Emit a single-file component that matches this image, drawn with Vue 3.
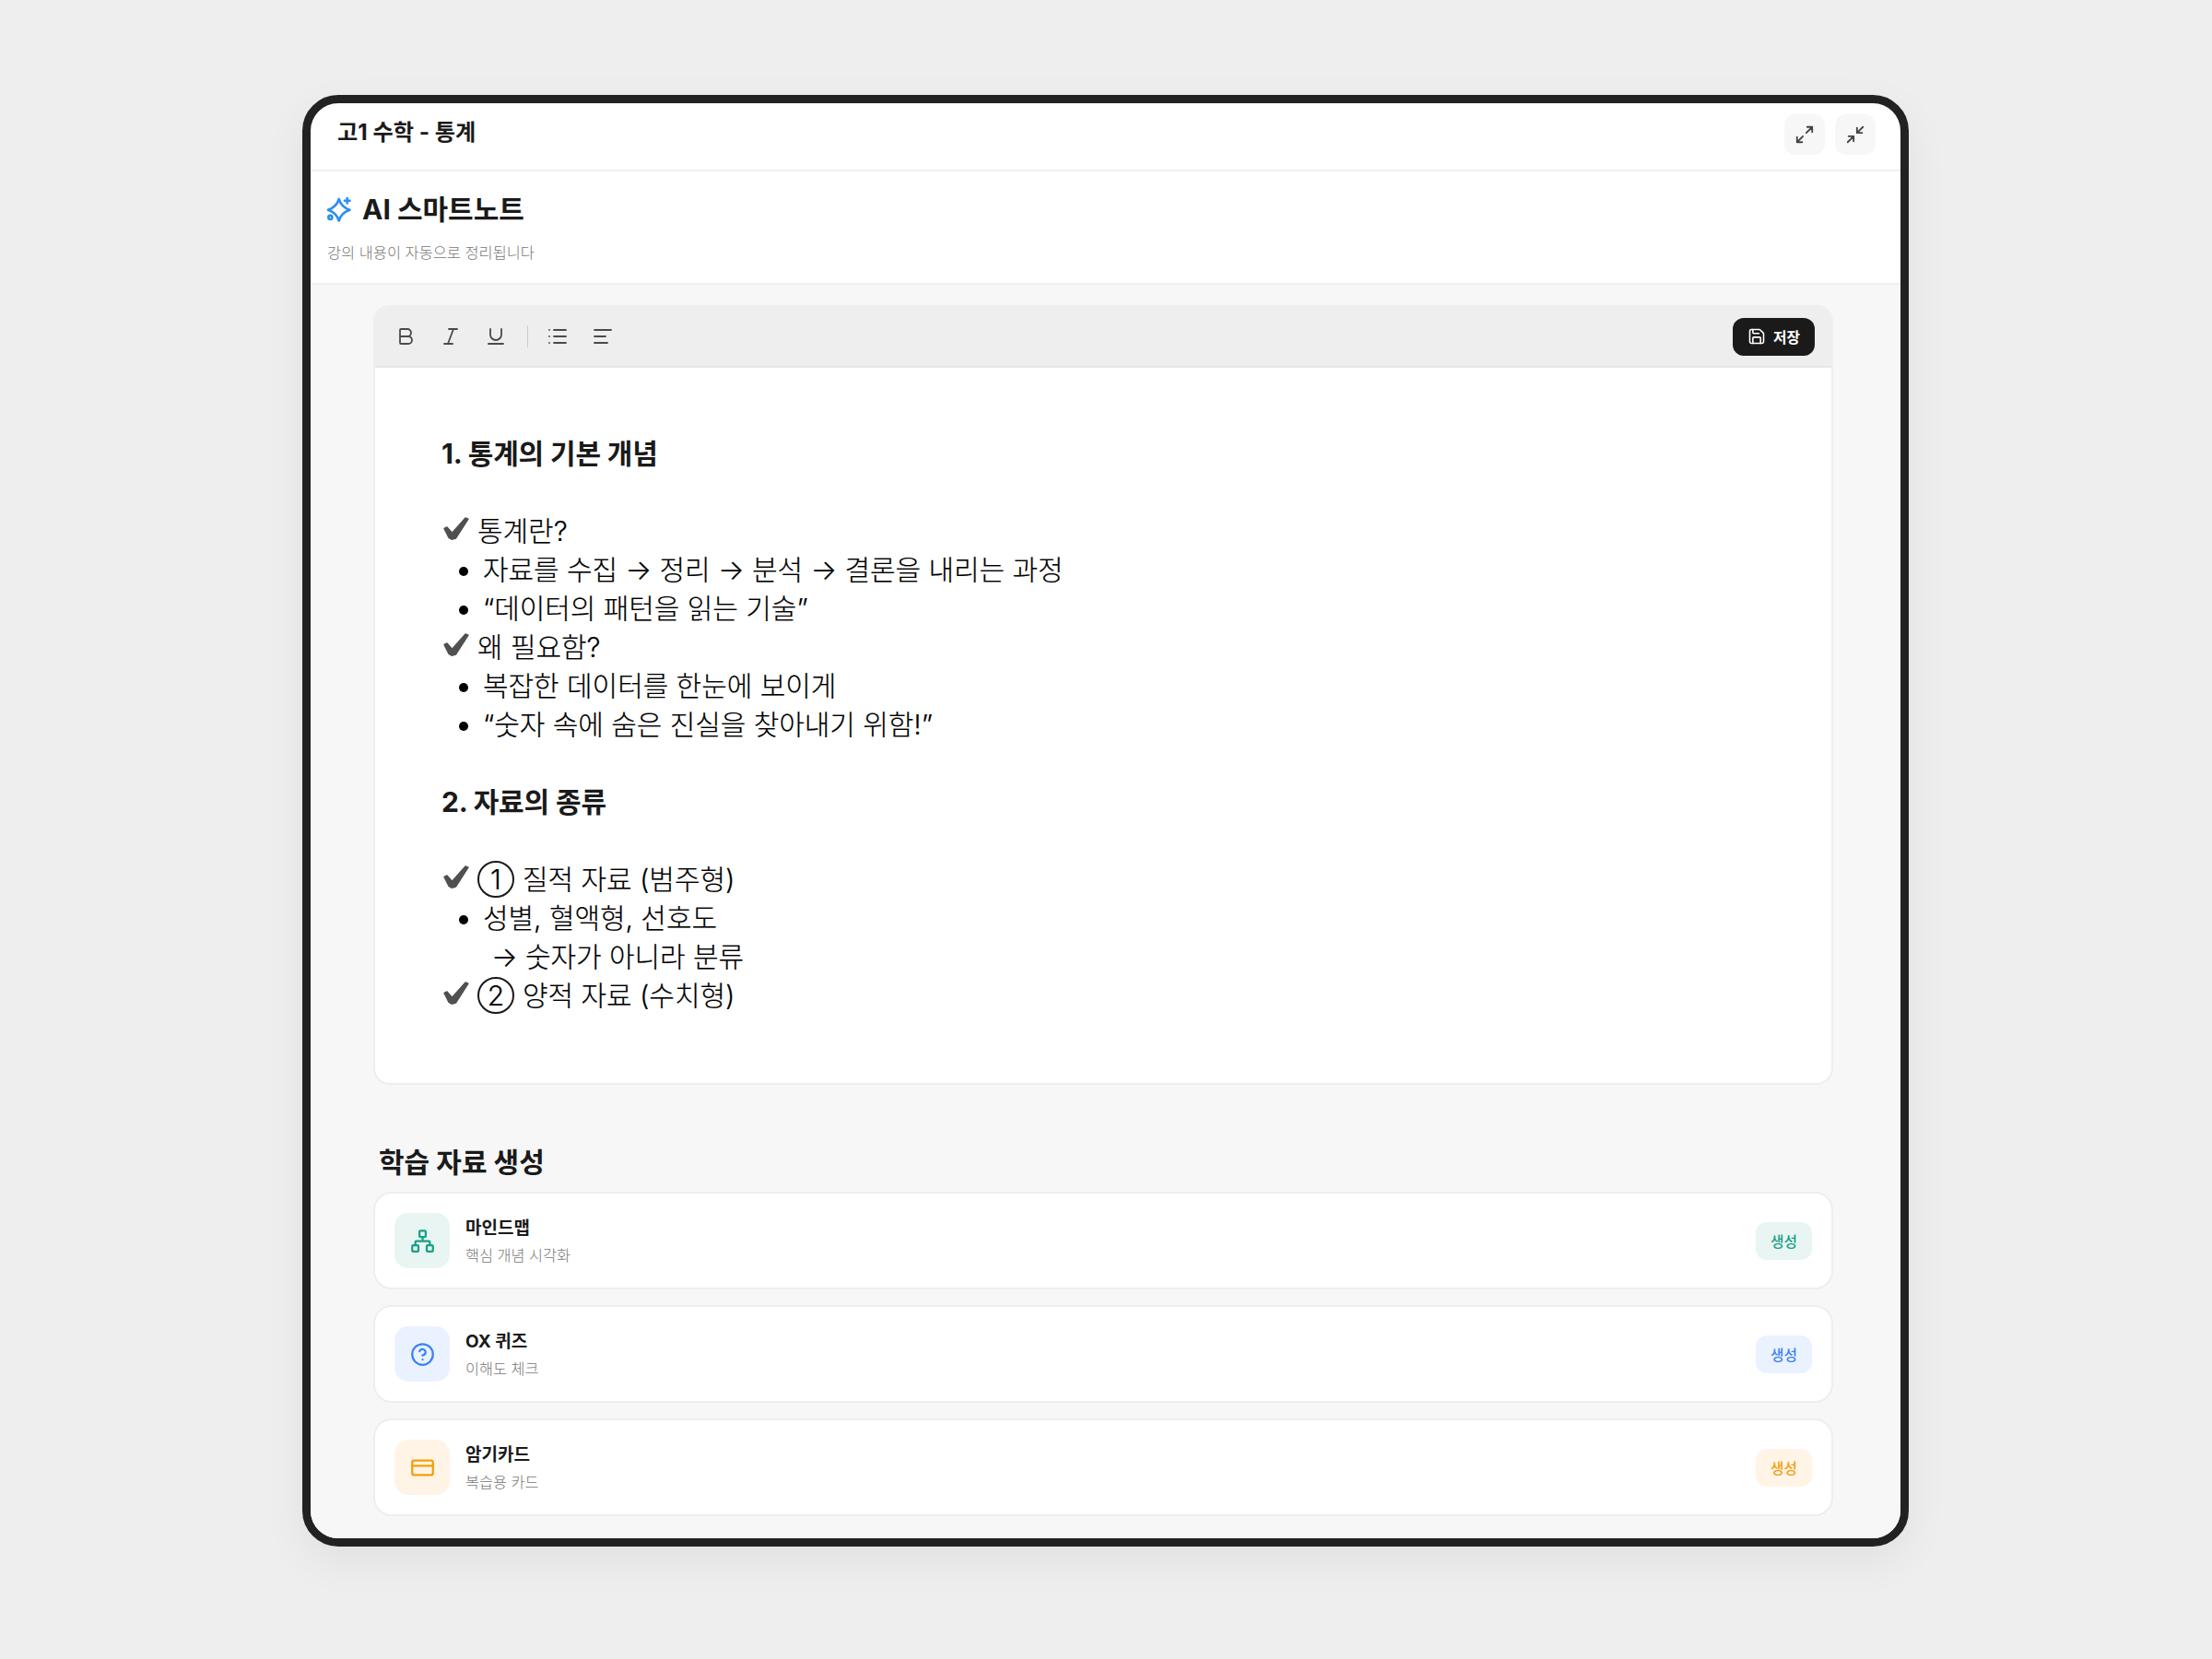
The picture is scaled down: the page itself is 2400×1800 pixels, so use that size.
<script setup>
const checkPath = 'M12 21.5 15 20l5.5 6.2L35 10l3 1.2L24.5 32l-4.5 1.2-3-1.7z'
const tools = [
  { title: '마인드맵', sub: '핵심 개념 시각화', tone: 'green', icon: 'map' },
  { title: 'OX 퀴즈', sub: '이해도 체크', tone: 'blue', icon: 'quiz' },
  { title: '암기카드', sub: '복습용 카드', tone: 'orange', icon: 'card' }
]
</script>

<template>
  <div class="page">
    <div class="device">
      <header class="topbar">
        <div class="course">고1 수학 - 통계</div>
        <div class="top-actions">
          <button class="round">
            <svg viewBox="0 0 24 24"><path d="M15 3h6v6M21 3l-7 7M3 21l7-7M9 21H3v-6" /></svg>
          </button>
          <button class="round">
            <svg viewBox="0 0 24 24"><path d="M4 14h6v6M20 10h-6V4M14 10l7-7M3 21l7-7" /></svg>
          </button>
        </div>
      </header>
      <section class="note-head">
        <div class="note-title">
          <svg class="spark" viewBox="0 0 24 24">
            <path d="M11.3 1.7C12.8 7 16 10.4 21.8 12.2C16 14 12.8 17.4 11.3 22.7C9.8 17.4 6.6 14 .8 12.2C6.6 10.4 9.8 7 11.3 1.7Z" />
            <path d="M19.3.8v5M16.8 3.3h5" />
            <circle cx="3" cy="19.5" r="1.8" />
          </svg>
          <span>AI 스마트노트</span>
        </div>
        <p class="note-sub">강의 내용이 자동으로 정리됩니다</p>
      </section>
      <main class="content">
        <section class="editor">
          <div class="toolbar">
            <div class="tools">
              <svg viewBox="0 0 24 24"><path d="M6 12h9a4 4 0 0 1 0 8H7a1 1 0 0 1-1-1V5a1 1 0 0 1 1-1h7a4 4 0 0 1 0 8" /></svg>
              <svg viewBox="0 0 24 24"><path d="M19 4h-9M14 20H5M15 4 9 20" /></svg>
              <svg viewBox="0 0 24 24"><path d="M6 4v6a6 6 0 0 0 12 0V4M4 20h16" /></svg>
              <i class="sep"></i>
              <svg viewBox="0 0 24 24"><path d="M3 5h.01M3 12h.01M3 19h.01M8 5h13M8 12h13M8 19h13" /></svg>
              <svg viewBox="0 0 24 24"><path d="M21 5H3M15 12H3M17 19H3" /></svg>
            </div>
            <button class="save">
              <svg viewBox="0 0 24 24"><path d="M15.2 3a2 2 0 0 1 1.4.6l3.8 3.8a2 2 0 0 1 .6 1.4V19a2 2 0 0 1-2 2H5a2 2 0 0 1-2-2V5a2 2 0 0 1 2-2z" /><path d="M17 21v-7a1 1 0 0 0-1-1H8a1 1 0 0 0-1 1v7M7 3v4a1 1 0 0 0 1 1h7" /></svg>
              <span>저장</span>
            </button>
          </div>
          <div class="doc">
            <h3>1. 통계의 기본 개념</h3>
            <p class="blank">&nbsp;</p>
            <p class="row"><svg class="chk" viewBox="9 8 32 28"><path :d="checkPath" /></svg>통계란?</p>
            <ul>
              <li>자료를 수집 → 정리 → 분석 → 결론을 내리는 과정</li>
              <li>“데이터의 패턴을 읽는 기술”</li>
            </ul>
            <p class="row"><svg class="chk" viewBox="9 8 32 28"><path :d="checkPath" /></svg>왜 필요함?</p>
            <ul>
              <li>복잡한 데이터를 한눈에 보이게</li>
              <li>“숫자 속에 숨은 진실을 찾아내기 위함!”</li>
            </ul>
            <p class="blank">&nbsp;</p>
            <h3>2. 자료의 종류</h3>
            <p class="blank">&nbsp;</p>
            <p class="row"><svg class="chk" viewBox="9 8 32 28"><path :d="checkPath" /></svg><span class="num">1</span>질적 자료 (범주형)</p>
            <ul>
              <li>성별, 혈액형, 선호도</li>
            </ul>
            <p class="arrow">→ 숫자가 아니라 분류</p>
            <p class="row"><svg class="chk" viewBox="9 8 32 28"><path :d="checkPath" /></svg><span class="num">2</span>양적 자료 (수치형)</p>
          </div>
        </section>
        <h2 class="gen-title">학습 자료 생성</h2>
        <div class="cards">
          <article v-for="t in tools" :key="t.title" class="card" :class="t.tone">
            <div class="badge">
              <svg v-if="t.icon === 'map'" viewBox="0 0 24 24"><rect x="9" y="2" width="6" height="6" rx="1" /><rect x="16" y="16" width="6" height="6" rx="1" /><rect x="2" y="16" width="6" height="6" rx="1" /><path d="M5 16v-3a1 1 0 0 1 1-1h12a1 1 0 0 1 1 1v3M12 12V8" /></svg>
              <svg v-else-if="t.icon === 'quiz'" viewBox="0 0 24 24"><circle cx="12" cy="12" r="10" /><path d="M9.1 9a3 3 0 0 1 5.8 1c0 2-3 3-3 3M12 17h.01" /></svg>
              <svg v-else viewBox="0 0 24 24"><rect x="2" y="5" width="20" height="14" rx="2" /><path d="M2 10h20" /></svg>
            </div>
            <div class="card-text">
              <div class="card-title">{{ t.title }}</div>
              <div class="card-sub">{{ t.sub }}</div>
            </div>
            <button class="make">생성</button>
          </article>
        </div>
      </main>
    </div>
  </div>
</template>

<style>
html, body { background: #eeeeee; }
</style>

<style scoped>
* { box-sizing: border-box; }
.page {
  width: 2400px;
  height: 1800px;
  padding-top: 103px;
  background: #eeeeee;
  font-family: Inter, "Noto Sans CJK KR", sans-serif;
  color: #1a1a1a;
}
.device {
  width: 1743px;
  height: 1575px;
  margin-left: 328px;
  border: 9px solid #222222;
  border-radius: 39px;
  background: #ffffff;
  overflow: hidden;
  box-shadow: 0 16px 48px rgba(0, 0, 0, 0.06);
  display: flex;
  flex-direction: column;
}
.topbar {
  height: 74px;
  flex: none;
  border-bottom: 2px solid #f0f0f0;
  display: flex;
  justify-content: space-between;
  padding: 12px 27px 0 29px;
}
.course { font-size: 24.2px; font-weight: 700; line-height: 40px; }
.top-actions { display: flex; gap: 11px; }
.round {
  width: 44px;
  height: 44px;
  border: 0;
  padding: 0;
  border-radius: 12px;
  background: #f7f7f7;
  display: flex;
  align-items: center;
  justify-content: center;
}
.round svg { width: 22px; height: 22px; fill: none; stroke: #444; stroke-width: 2; stroke-linecap: round; stroke-linejoin: round; }
.note-head {
  height: 123px;
  flex: none;
  border-bottom: 2px solid #f0f0f0;
  padding: 21px 18px 0;
}
.note-title { display: flex; align-items: center; gap: 11px; font-size: 30px; font-weight: 700; line-height: 40px; }
.spark { width: 27px; height: 27px; fill: none; stroke: #2b8ff0; stroke-width: 2.3; stroke-linecap: round; stroke-linejoin: round; }
.note-sub { margin: 15px 0 0; font-size: 16.4px; line-height: 24px; font-weight: 300; color: #777777; }
.content { flex: 1; background: #f7f7f7; padding: 22px 73px 0 68px; min-height: 0; }
.editor { height: 846px; background: #fff; border: 2px solid #eeeeee; border-radius: 18px; overflow: hidden; }
.toolbar {
  height: 66px;
  background: #eeeeee;
  border-bottom: 2px solid #e6e6e6;
  display: flex;
  align-items: center;
  justify-content: space-between;
  padding: 0 18px 0 21px;
}
.tools { display: flex; align-items: center; gap: 25px; }
.tools svg { width: 24px; height: 24px; fill: none; stroke: #4a4a4a; stroke-width: 1.8; stroke-linecap: round; stroke-linejoin: round; }
.sep { width: 1px; height: 24px; background: #cccccc; margin: 0 -5px 0 -3px; }
.save {
  width: 89px;
  height: 41px;
  border: 0;
  border-radius: 12px;
  background: #1a1a1a;
  color: #fff;
  font-family: inherit;
  font-size: 15.75px;
  font-weight: 700;
  display: flex;
  align-items: center;
  justify-content: center;
  gap: 8px;
  padding: 0;
}
.save svg { width: 20px; height: 20px; fill: none; stroke: #fff; stroke-width: 1.9; stroke-linecap: round; stroke-linejoin: round; }
.doc { padding: 72px 72px 0; font-size: 30px; line-height: 42px; font-weight: 300; letter-spacing: -0.05px; color: #000; -webkit-text-stroke: 0.2px #000; }
.doc h3 { margin: 0; font-size: 30px; line-height: 42px; font-weight: 700; letter-spacing: -0.15px; color: #1a1a1a; -webkit-text-stroke: 0; }
.doc p { margin: 0; }
.doc ul { margin: 0; padding: 0 0 0 45px; }
.row { display: flex; align-items: center; height: 42px; }
.chk { width: 32px; height: 28px; flex: none; margin: 0 7px 4px 0; fill: #505050; stroke: #505050; stroke-width: 1.4; stroke-linejoin: round; }
.num {
  width: 40px;
  height: 40px;
  flex: none;
  margin: 0 9px 0 0;
  border: 2px solid #1a1a1a;
  border-radius: 50%;
  display: flex;
  align-items: center;
  justify-content: center;
  font-size: 30px;
  line-height: 1;
}
.arrow { padding-left: 54px; }
.gen-title { margin: 63px 0 0 6px; font-size: 30px; line-height: 42px; font-weight: 700; }
.cards { margin-top: 11px; display: flex; flex-direction: column; gap: 17px; }
.card {
  height: 106px;
  background: #fff;
  border: 2px solid #eeeeee;
  border-radius: 20px;
  display: flex;
  align-items: center;
  padding: 0 21px;
}
.badge { width: 60px; height: 60px; border-radius: 15px; display: flex; align-items: center; justify-content: center; flex: none; }
.badge svg { width: 27px; height: 27px; fill: none; stroke-width: 2; stroke-linecap: round; stroke-linejoin: round; }
.card-text { flex: 1; margin-left: 17px; }
.card-title { font-size: 19px; font-weight: 700; line-height: 28px; padding-top: 1px; }
.card-sub { font-size: 16.3px; line-height: 24px; margin-top: 3px; font-weight: 300; color: #777777; }
.make {
  width: 61px;
  height: 41px;
  border: 0;
  padding: 0;
  border-radius: 12px;
  font-family: inherit;
  font-size: 15.75px;
  font-weight: 500;
}
.green .badge, .green .make { background: #e8f5f2; }
.green svg { stroke: #16a085; }
.green .make { color: #16a085; }
.blue .badge, .blue .make { background: #ebf2ff; }
.blue svg { stroke: #3b82f6; }
.blue .make { color: #3b82f6; }
.orange .badge, .orange .make { background: #fff4e6; }
.orange svg { stroke: #f59e0b; }
.orange .make { color: #f59e0b; }
</style>
